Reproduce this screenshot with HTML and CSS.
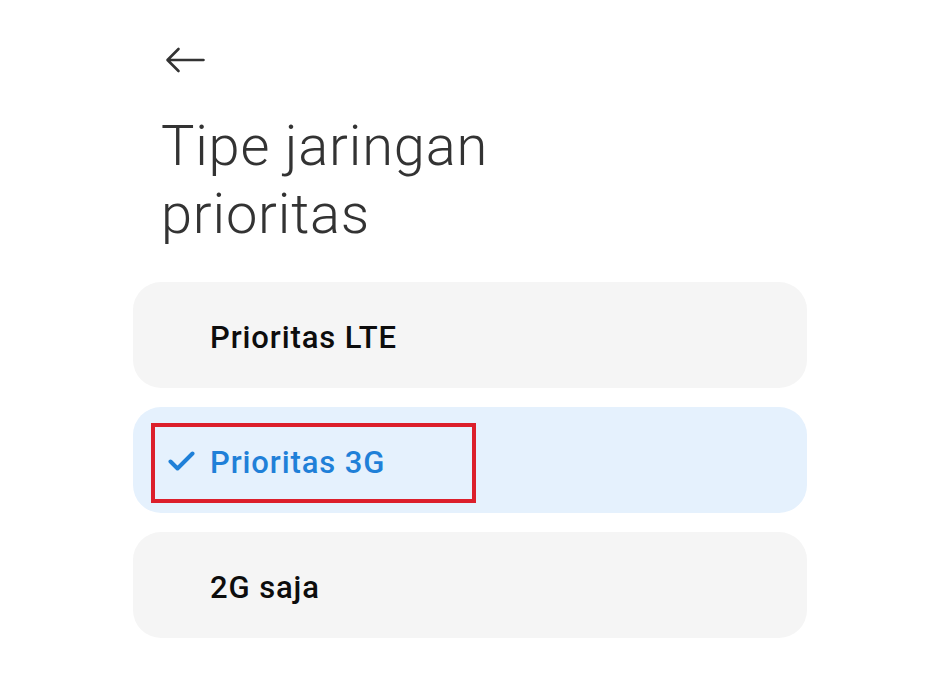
FILE: index.html
```html
<!DOCTYPE html>
<html lang="id">
<head>
<meta charset="utf-8">
<link rel="stylesheet" href="styles.css">
</head>
<body>
<div class="page">
  <div class="topbar">
    <svg class="back" width="40" height="26" viewBox="0 0 40 26" aria-label="Kembali">
      <path d="M38.5 13H3 M13.5 2L2.5 13L13.5 24" fill="none" stroke="#333" stroke-width="2.6" stroke-linecap="round" stroke-linejoin="round"/>
    </svg>
  </div>
  <h1 class="title">Tipe jaringan<br>prioritas</h1>
  <div class="list">
    <div class="card"><span class="label">Prioritas LTE</span></div>
    <div class="card selected">
      <svg class="check" width="27" height="20" viewBox="0 0 27 20">
        <path d="M2.5 10.5L9.5 17.5L24.5 2.5" fill="none" stroke="#1f80d8" stroke-width="4" stroke-linecap="round" stroke-linejoin="round"/>
      </svg>
      <span class="label">Prioritas 3G</span>
      <div class="highlight"></div>
    </div>
    <div class="card"><span class="label">2G saja</span></div>
  </div>
</div>
</body>
</html>
```
FILE: styles.css
```css
html, body {
  margin: 0;
  padding: 0;
  background: #ffffff;
}
body {
  font-family: Roboto, "Liberation Sans", sans-serif;
  width: 934px;
  height: 678px;
  overflow: hidden;
}
.page {
  padding-left: 133px;
  width: 674px;
}
.topbar {
  height: 112px;
  box-sizing: border-box;
  padding-top: 47px;
  padding-left: 32px;
}
.back {
  display: block;
}
.title {
  margin: 0 0 34px 28px;
  font-weight: 300;
  font-size: 56px;
  line-height: 68px;
  color: #333333;
  letter-spacing: 0.8px;
}
.list {
  display: flex;
  flex-direction: column;
  gap: 19px;
}
.card {
  position: relative;
  height: 106px;
  border-radius: 28px;
  background: #f5f5f5;
  display: flex;
  align-items: center;
  box-sizing: border-box;
  padding-left: 77px;
  padding-top: 5px;
}
.card.selected {
  background: #e5f1fd;
  padding-left: 35px;
}
.label {
  font-size: 31px;
  font-weight: 500;
  line-height: 34px;
  letter-spacing: 0.9px;
  color: #0d0d0d;
}
.selected .label {
  color: #1f80d8;
}
.check {
  display: block;
  margin-right: 15px;
  margin-top: -3px;
}
.highlight {
  position: absolute;
  left: 18px;
  top: 16px;
  width: 325px;
  height: 80px;
  box-sizing: border-box;
  border: 4px solid #dc1f2b;
}
```
